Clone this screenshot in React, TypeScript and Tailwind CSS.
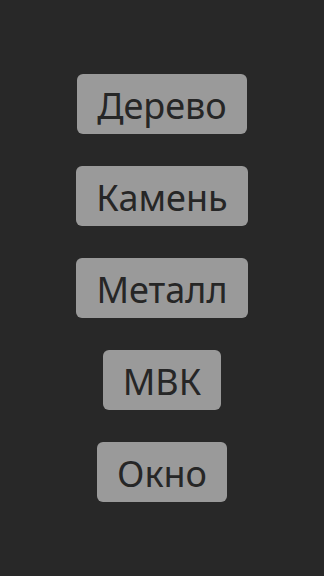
import React from 'react';

const items = ['Дерево', 'Камень', 'Металл', 'МВК', 'Окно'];

export default function App() {
    return (
        <div className="w-full h-screen bg-[#282828] flex flex-col items-center justify-center gap-[32px]" style={{ fontFamily: '"Noto Sans", "Open Sans", sans-serif' }}>
            {items.map((t) => (
                <button
                    key={t}
                    className="h-[60px] px-[20px] pt-[3px] rounded-md bg-[#9a9a9a] text-[#262626] text-[36px] leading-none flex items-center justify-center"
                >
                    {t}
                </button>
            ))}
        </div>
    );
}
